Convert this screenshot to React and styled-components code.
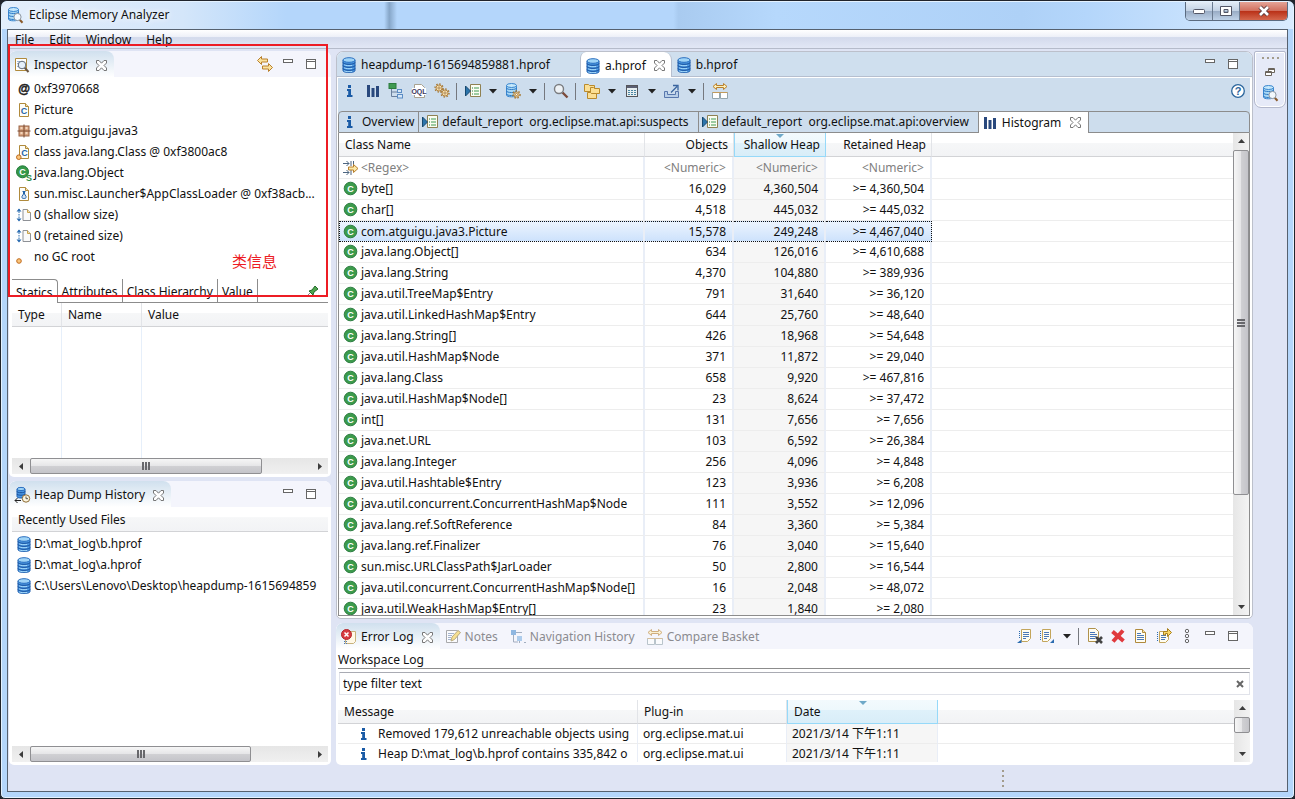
import React from "react";
import styled, { createGlobalStyle, css } from "styled-components";

const ui = {
  font: '"Noto Sans", "Noto Sans CJK SC", sans-serif',
  shell: "#dfe4f4",
  blue: "#cddded",
  line: "#8c8c8c",
  grid: "#ededed",
};

const GlobalStyle = createGlobalStyle`
  * { box-sizing: border-box; }
  body {
    margin: 0;
    background: #20242c;
    color: #111;
    font: 12px/16px ${ui.font};
  }
  button, input {
    font: inherit;
    color: inherit;
    margin: 0;
    padding: 0;
    border: 0;
    background: none;
  }
`;

/* ---------- icons ---------- */

const Svg = styled.svg`
  display: block;
  flex: none;
  overflow: visible;
`;

const Database = () => (
  <g>
    <path d="M2 3v10.5c0 1.4 2.6 2 6 2s6-.6 6-2V3z" fill="#4a97e2" stroke="#1f5fae" />
    <path d="M2 5.5c0 2.4 12 2.4 12 0M2 8.5c0 2.4 12 2.4 12 0M2 11.5c0 2.4 12 2.4 12 0" fill="none" stroke="#174f9c" />
    <path d="M3.2 7.8c1.6 1 5.400 1.100 8 .6M3.2 10.8c1.6 1 5.400 1.100 8 .6M3.2 13.8c1.6 1 5.400 1.100 8 .6" fill="none" stroke="#a5d9fa" />
    <ellipse cx="8" cy="3" rx="6" ry="2.3" fill="#9fd4f7" stroke="#2a6fc0" />
  </g>
);

const PaleDatabase = () => (
  <g>
    <path d="M1.5 2.5v9.500c0 1.200 2 1.800 5 1.800s5-.6 5-1.800V2.500z" fill="#a9d8f5" stroke="#3a86cf" />
    <path d="M1.5 5c0 2 10 2 10 0M1.5 8c0 2 10 2 10 0M1.5 11c0 2 10 2 10 0" fill="none" stroke="#2f7ac6" />
    <ellipse cx="6.5" cy="2.5" rx="5" ry="2" fill="#c6e8fb" stroke="#3a86cf" />
  </g>
);

const Lens = () => (
  <g>
    <path d="M12.5 12.5l3 3.2" stroke="#8a5a2b" strokeWidth="2" />
    <circle cx="10.500" cy="10" r="3.6" fill="#f2f8fd" stroke="#8d97a3" />
  </g>
);

const Cog = ({ x, y, r = 3 }) => (
  <g>
    <circle cx={x} cy={y} r={r + 1} fill="none" stroke="#a5752f" strokeWidth="1.4" strokeDasharray="1.5 1.6" />
    <circle cx={x} cy={y} r={r} fill="#f8e2b4" stroke="#b07f38" strokeWidth="0.9" />
    <circle cx={x} cy={y} r="1.1" fill="#fff" stroke="#9a6a24" strokeWidth="0.8" />
  </g>
);

const Sheet = ({ fill = "#fdfdf8", stroke = "#b08a3c" }) => (
  <g>
    <path d="M3.5 1.5h6l3 3v10h-9z" fill={fill} stroke={stroke} />
    <path d="M9.5 1.5v3h3" fill="#f4e2ad" stroke={stroke} />
  </g>
);

const Letter = ({ x, y, size = 9, fill, children }) => (
  <text x={x} y={y} fontSize={size} fontWeight="700" textAnchor="middle" fill={fill} fontFamily='"Liberation Sans", sans-serif'>
    {children}
  </text>
);

const shapes = {
  database: <Database />,
  app: <g><PaleDatabase /><Lens /></g>,
  inspector: (
    <g>
      <path d="M1.5 1.5h11v12h-11z" fill="#fff" stroke="#b08a3c" />
      <path d="M3 4.5h3M3 6.5h2M3 9.5h2" stroke="#9ab3d4" />
      <path d="M10.5 10.5l4 4.5" stroke="#6a5540" strokeWidth="2" />
      <circle cx="8" cy="8" r="3.8" fill="#e5eff9" stroke="#5f6a78" />
    </g>
  ),
  at: (
    <g stroke="#222" strokeWidth="0.5">
      <Letter x={8} y={11.5} size={12} fill="#222">@</Letter>
    </g>
  ),
  classFile: <g><Sheet /><Letter x={8} y={12} size={9} fill="#2464a8">C</Letter></g>,
  classObject: (
    <g>
      <Sheet />
      <Letter x={8.5} y={12} size={9} fill="#2464a8">C</Letter>
      <circle cx="2.8" cy="13.2" r="2.3" fill="#fac57c" stroke="#c06a1c" />
    </g>
  ),
  packageBox: (
    <g>
      <rect x="3" y="3" width="10" height="10" fill="#d9a582" stroke="#9a6446" />
      <path d="M4.500 5h2M9.500 5h2M4.500 10h2M9.500 10h2" stroke="#f3d6bd" strokeWidth="2" />
      <path d="M8 1.500v13M1.500 8h13" stroke="#7a4a30" />
    </g>
  ),
  classSuper: (
    <g>
      <circle cx="6.5" cy="6.8" r="6" fill="#36994a" stroke="#1f7a38" />
      <Letter x={6.5} y={10} size={9} fill="#fff">C</Letter>
      <Letter x={13} y={15.5} size={9} fill="#2b8a3e">S</Letter>
    </g>
  ),
  loader: (
    <g>
      <Sheet />
      <path d="M6.5 5.500h3M7.5 6v2L6 10.400c-.5 1 .2 2 1.2 2h1.600c1 0 1.700-1 1.200-2L8.500 8V6" fill="#d6e6f7" stroke="#2464a8" />
    </g>
  ),
  size: (
    <g>
      <path d="M3 2v12" stroke="#2b6cb0" strokeDasharray="1.5 1" />
      <path d="M.5 4.5L3 1.5l2.5 3zM.5 11.5L3 14.5l2.5-3z" fill="#2b6cb0" />
      <path d="M7 2.5h4.500l3 3v8H7z" fill="#fafafa" stroke="#8e9196" />
      <path d="M11.5 2.5v3h3" fill="#f4e2ad" stroke="#c9a24b" />
    </g>
  ),
  root: <circle cx="3" cy="12" r="2.3" fill="#fac57c" stroke="#c06a1c" />,
  classIcon: (
    <g>
      <circle cx="7.5" cy="7.5" r="6.3" fill="#3c9b4b" stroke="#2c7d42" />
      <Letter x={7.5} y={10.800} size={9} fill="#fff">C</Letter>
    </g>
  ),
  pin: (
    <g>
      <path d="M2 14l4-4" stroke="#888" />
      <path d="M5 8l3-1 3-4 3 3-4 3-1 3z" fill="#4fa64f" stroke="#246b2c" />
    </g>
  ),
  history: (
    <g>
      <path d="M3 2v7.500c0 1 1.500 1.500 4 1.500s4-.5 4-1.500V2z" fill="#4a97e2" stroke="#1f5fae" />
      <path d="M3 4.500c0 1.600 8 1.600 8 0M3 7c0 1.600 8 1.600 8 0" fill="none" stroke="#174f9c" />
      <ellipse cx="7" cy="2" rx="4" ry="1.600" fill="#9fd4f7" stroke="#2a6fc0" />
      <path d="M7 13.5H1M3.5 11L1 13.5 3.5 16" fill="none" stroke="#222" />
      <circle cx="12" cy="11.5" r="3.7" fill="#fdf6e0" stroke="#8d6b33" />
      <path d="M12 9.5v2.200h2" fill="none" stroke="#555" />
    </g>
  ),
  info: (
    <g fill="#1a5ba6">
      <rect x="6" y="2" width="3" height="3" />
      <path d="M5 6h4v6h1.500v2H5v-2h1.200V8H5z" />
    </g>
  ),
  bars: <path d="M2 2h3v12H2zM6.5 5h3v9h-3zM11 3h3v11h-3z" fill="#29487d" />,
  tree: (
    <g>
      <path d="M3.5 6v7.5H9M3.5 9H9" fill="none" stroke="#6a7f9c" />
      <rect x="1" y="0.5" width="7" height="5" fill="#3f9a52" stroke="#2c7c3f" />
      <rect x="9.5" y="6.5" width="4" height="3" fill="#d5e6f7" stroke="#5b8cc4" />
      <rect x="9.5" y="11.5" width="5" height="3.5" fill="#d5e6f7" stroke="#5b8cc4" />
    </g>
  ),
  oql: (
    <g>
      <path d="M3.5 1.500h7l3 3v10h-10z" fill="#fff" stroke="#a8a290" />
      <rect x="1" y="5" width="14" height="7" fill="#fff" />
      <Letter x={8} y={11} size={7} fill="#3a3560">OQL</Letter>
    </g>
  ),
  gears: <g><Cog x={5} y={5} r={3} /><Cog x={11} y={10} r={3} /></g>,
  report: (
    <g>
      <path d="M5.500 1.500h10v12h-10z" fill="#fbfdf2" stroke="#8f8152" />
      <path d="M9 5h5M9 8h5M9 11h5" stroke="#3f9a52" />
      <path d="M7 5h1M7 8h1M7 11h1" stroke="#2b7a3e" />
      <path d="M.5 3v10l5-5z" fill="#2b74ab" stroke="#17496f" />
    </g>
  ),
  dbGear: <g><PaleDatabase /><Cog x={11.500} y={11.500} r={2.600} /></g>,
  search: (
    <g>
      <path d="M9.5 9.5l5 5" stroke="#7c4b3a" strokeWidth="2.400" />
      <circle cx="6" cy="6" r="4.5" fill="#eef2f5" stroke="#7b7d80" strokeWidth="1.400" />
    </g>
  ),
  folders: (
    <g fill="#fbdf94" stroke="#b98a2c">
      <path d="M.5 1.500h4l1 1h5v6H.5z" />
      <path d="M6.500 4.500h3l1 1h5v5h-9z" />
      <path d="M3.500 9.500h3l1 1h5v5h-9z" />
    </g>
  ),
  calc: (
    <g>
      <rect x="2.5" y="2.5" width="11" height="11" fill="#e6eef0" stroke="#55555a" />
      <path d="M3 4h10" stroke="#5b5f72" strokeWidth="2" />
      <path d="M4 7.5h8M4 9.5h8M4 11.5h8" stroke="#4b86a3" strokeDasharray="2 1" />
    </g>
  ),
  exportIcon: (
    <g>
      <path d="M.5 8.500h3v3h8v-3h3v6H.5z" fill="#b9cfe8" stroke="#5877ad" />
      <path d="M7 9.5l6-6M9 2.5h5v5" fill="none" stroke="#3a659f" strokeWidth="1.300" />
    </g>
  ),
  compare: (
    <g>
      <path d="M1 3.5L4.5.5v2h7v-2l3.500 3-3.500 3v-2h-7v2z" fill="#fff0b8" stroke="#b9802c" />
      <path d="M.5 9.5h7v6h-7zM8.5 9.5h7v6h-7z" fill="#fff" stroke="#93a5ac" />
      <path d="M.5 9.5h15" stroke="#c29a5a" />
    </g>
  ),
  help: (
    <g>
      <circle cx="8" cy="8" r="6.300" fill="#fff" stroke="#2a659c" strokeWidth="1.300" />
      <Letter x={8} y={12} size={11} fill="#2a659c">?</Letter>
    </g>
  ),
  filter: (
    <g>
      <path d="M0 3.5h6M3.5 1L6 3.500 3.500 6M8 1v5M10.500 1v4" fill="none" stroke="#4c6580" />
      <path d="M0 12.5h6M3.5 10L6 12.500 3.500 15M8 10v5" fill="none" stroke="#4c6580" />
      <path d="M5.500 7h5V4.500L15 8.500l-4.500 4V10h-5z" fill="#fce9a9" stroke="#b9802c" />
    </g>
  ),
  link: (
    <g fill="#fbe3a0" stroke="#b9802c">
      <path d="M.5 4.500l4-4V3h6v3h-6v2.500z" />
      <path d="M15.500 11.500l-4-4V10h-6v3h6v2.500z" />
    </g>
  ),
  minimize: <rect x="3.5" y="3.5" width="9" height="3" fill="#fff" stroke="#666" />,
  maximize: (
    <g fill="#fff" stroke="#666">
      <rect x="3.5" y="3.5" width="9" height="9" />
      <path d="M3.5 5.5h9" />
    </g>
  ),
  restore: (
    <g fill="#fff" stroke="#6b645c">
      <path d="M6.5 4.5h6v4h-6zM6.5 5.5h6" />
      <path d="M3.5 7.5h6v4h-6zM3.5 8.5h6" />
    </g>
  ),
  errorLog: (
    <g>
      <path d="M4.500 2.500h10v10l-2 2h-8z" fill="#fff8e6" stroke="#c8b27c" />
      <path d="M3 12.5h4M3 14.5h4" stroke="#4a78b8" strokeDasharray="1 1" />
      <circle cx="5.5" cy="5.5" r="5" fill="#d73b41" stroke="#b3262c" />
      <path d="M3.5 3.5l4 4M7.5 3.500l-4 4" stroke="#fff" strokeWidth="1.500" />
    </g>
  ),
  notes: (
    <g>
      <path d="M1.500 1.500h11v12h-11z" fill="#fff" stroke="#777" />
      <path d="M3 4.5h6M3 6.5h4M3 8.5h3M3 10.5h3" stroke="#6f87ae" />
      <path d="M6 12l1-4 6-6.500 2.500 2-6 7z" fill="#f7d04a" stroke="#8f7a2d" />
    </g>
  ),
  navigation: (
    <g>
      <path d="M3.5 6v7H8M6 3.5h6M14 13.5h2" fill="none" stroke="#6c7f99" />
      <rect x="1" y="1" width="5" height="5" fill="#4d8fd0" />
      <rect x="7" y="7" width="5" height="5" fill="#7fb2e3" />
      <path d="M9.5 12v2" stroke="#6c7f99" />
    </g>
  ),
  importLog: (
    <g>
      <path d="M5.500 1.500h9v9l-3 3h-6z" fill="#fffdf2" stroke="#c3a55b" />
      <path d="M7 4.5h6M7 6.5h6M7 8.5h6M7 10.5h3" stroke="#4a78b8" />
      <path d="M3.5 3v8" stroke="#2b6cb0" strokeDasharray="1 1" />
      <path d="M1 15l4.500-3.500V15z" fill="#2b6cb0" />
    </g>
  ),
  exportLog: (
    <g>
      <path d="M3.500 1.500h8v9l-3 3h-5z" fill="#fffdf2" stroke="#c3a55b" />
      <path d="M5 4.5h5M5 6.5h5M5 8.5h5M5 10.5h3" stroke="#4a78b8" />
      <path d="M1.5 3v9" stroke="#2b6cb0" strokeDasharray="1 1" />
      <path d="M15 11l-4 4h4z" fill="#2b6cb0" />
    </g>
  ),
  clearLog: (
    <g>
      <path d="M1.500.500h7l3 3v10h-10z" fill="#fffdf2" stroke="#b0924c" />
      <path d="M3 4.5h5M3 6.5h7M3 8.5h6M3 10.5h5" stroke="#4a78b8" />
      <path d="M9 9l6 6M15 9l-6 6" stroke="#444" strokeWidth="2.600" />
    </g>
  ),
  deleteLog: <path d="M2.500 3.500l11 9.500M13 2.500l-10 11" stroke="#e03a3e" strokeWidth="4" />,
  openLog: (
    <g>
      <path d="M2.500 1.500h7l3 3v10h-10z" fill="#fffdf2" stroke="#b08a3c" />
      <path d="M9.500 1.500v3h3" fill="#f4e2ad" stroke="#b08a3c" />
      <path d="M4 5.5h4M4 7.5h7M4 9.5h7M4 11.5h7" stroke="#4a78b8" />
    </g>
  ),
  restoreLog: (
    <g>
      <path d="M3.500 3.500h9v8l-3 3h-6z" fill="#fffdf2" stroke="#c3a55b" />
      <path d="M5 7.5h5M5 9.5h5M5 11.5h4" stroke="#4a78b8" />
      <path d="M1.5 4v10" stroke="#2b6cb0" strokeDasharray="1 1" />
      <path d="M7.500 7V3.500h4v-3l4 4-4 4v-3h-2V7z" fill="#fbd766" stroke="#a8801f" />
    </g>
  ),
  viewMenu: (
    <g fill="none" stroke="#666">
      <circle cx="8" cy="3" r="1.700" />
      <circle cx="8" cy="8" r="1.700" />
      <circle cx="8" cy="13" r="1.700" />
    </g>
  ),
};

const Icon = ({ name }) => (
  <Svg width="16" height="16" viewBox="0 0 16 16" aria-hidden="true">{shapes[name]}</Svg>
);

const CloseGlyph = () => (
  <Svg width="11" height="11" viewBox="0 0 11 11" aria-hidden="true">
    <path
      d="M.5.5H3l2.5 2.700L8 .5h2.500V3L8 5.500 10.500 8v2.500H8L5.500 7.800 3 10.500H.5V8L3 5.500.5 3z"
      fill="#fff"
      stroke="#777"
    />
  </Svg>
);

const CaretGlyph = () => (
  <Svg width="8" height="5" viewBox="0 0 8 5" aria-hidden="true"><path d="M0 0h8L4 4.500z" fill="#222" /></Svg>
);

const arrows = { left: "M5 0v7L1 3.500z", right: "M2 0v7l4-3.500z", up: "M0 5h7L3.500 1z", down: "M0 2h7L3.500 6z" };

const Arrow = ({ to }) => (
  <Svg width="7" height="7" viewBox="0 0 7 7" aria-hidden="true"><path d={arrows[to]} fill="#3c3c3c" /></Svg>
);

/* ---------- window frame ---------- */

const Frame = styled.div`
  display: flex;
  flex-direction: column;
  height: 100vh;
  min-height: 480px;
  padding: 0 6px 6px;
  border: 1px solid #20242c;
  border-radius: 7px 7px 5px 5px;
  background: #b4d6fb;
  box-shadow: inset 0 0 0 1px #e4f2ff;
`;

const TitleBar = styled.header`
  display: flex;
  align-items: flex-start;
  height: 28px;
  flex: none;
  margin: 0 -5px;
  padding-left: 5px;
  border-radius: 6px 6px 0 0;
  background: linear-gradient(90deg, #e3eefb 0, #d4e6fa 14%, #b4d6fb 22%, #b4d6fb 29.6%, #86a6c8 30%, #b4d6fb 30.6%, #b4d6fb 52%, #a9cbf0 52.4%, #b6d8fc 60%, #aed1f7 79%, #b4d6fb 84%, #d9ebfe 100%);
  border-top: 1px solid #e4f2ff;
`;

const AppTitle = styled.h1`
  display: flex;
  align-items: center;
  gap: 6px;
  flex: 1;
  height: 26px;
  margin: 0;
  font-size: 12px;
  font-weight: 400;
  text-shadow: 0 0 6px #fff, 0 0 8px #fff;
`;

const WindowButtons = styled.div`
  display: flex;
  margin-right: 5px;
  border: 1px solid #5b6b80;
  border-top: 0;
  border-radius: 0 0 5px 5px;
  overflow: hidden;
`;

const WindowButton = styled.button`
  display: grid;
  place-items: center;
  width: ${p => (p.$close ? 47 : 27)}px;
  height: 18px;
  border-right: ${p => (p.$close ? 0 : "1px solid #6b7b90")};
  background: ${p =>
    p.$close
      ? "linear-gradient(#e5a497 0, #d1705f 48%, #b92f16 50%, #d4674d 100%)"
      : "linear-gradient(#e3ecf6 0, #c3d2e4 48%, #98abc4 50%, #bfd2e8 100%)"};
`;

const Client = styled.div`
  display: flex;
  flex-direction: column;
  flex: 1;
  min-height: 0;
  border: 1px solid #56616f;
  background: ${ui.shell};
`;

const MenuBar = styled.nav`
  display: flex;
  align-items: center;
  gap: 15px;
  height: 19px;
  flex: none;
  padding: 2px 0 0 7px;
  border-bottom: 1px solid #b5bbca;
  background: linear-gradient(#fff 0, #edf0f8 38%, #d3daec 42%, #e2e7f5 100%);
`;

const MenuItem = styled.button`
  line-height: 18px;
`;

const Workbench = styled.main`
  display: flex;
  flex: 1;
  min-height: 0;
  padding: 2px 1px 0;
`;

const Column = styled.div`
  position: relative;
  display: flex;
  flex-direction: column;
  gap: 4px;
  flex: ${p => p.$grow} 1 0;
  min-width: 0;
  min-height: 0;
  margin-right: ${p => p.$gap}px;
`;

const TrimBar = styled.aside`
  width: 32px;
  flex: none;
`;

const TrimStack = styled.div`
  display: flex;
  flex-direction: column;
  align-items: center;
  gap: 5px;
  height: 57px;
  padding-top: 5px;
  border: 1px solid #b3b8cc;
  border-radius: 2px 2px 7px 7px;
  background: #e6eaf8;
  box-shadow: inset 0 0 0 1px #fff;
`;

const Handle = styled.div`
  width: ${p => (p.$vertical ? 2 : 17)}px;
  height: ${p => (p.$vertical ? 17 : 2)}px;
  background: repeating-linear-gradient(${p => (p.$vertical ? "180deg" : "90deg")}, #a39c8c 0 2px, transparent 2px 5px);
`;

const StatusBar = styled.footer`
  display: flex;
  align-items: center;
  justify-content: flex-end;
  height: 26px;
  flex: none;
  padding-right: 283px;
`;

/* ---------- views ---------- */

const View = styled.section`
  display: flex;
  flex-direction: column;
  flex: ${p => p.$grow} 1 0;
  min-height: 0;
  border-radius: 7px 7px 5px 5px;
  background: #fff;
  overflow: hidden;
`;

const ViewBody = styled.div`
  display: flex;
  flex-direction: column;
  flex: 1;
  min-height: 0;
  padding: 0 3px 3px ${p => p.$left || 3}px;
`;

const ViewHeader = styled.div`
  display: flex;
  align-items: stretch;
  height: 26px;
  flex: none;
  padding-right: 9px;
  background: #f4f5fc;
`;

const ViewTab = styled.button`
  display: flex;
  align-items: center;
  gap: 4px;
  padding: 2px 7px 0 5px;
  border-radius: 6px 8px 0 0;
  white-space: nowrap;
  svg:last-child { margin-left: 4px; }
  ${p =>
    p.$active
      ? css`
          background: linear-gradient(#d0e0ee, #fff);
        `
      : css`
          color: #8b8b90;
          svg { opacity: 0.6; }
        `}
`;

const Tools = styled.div`
  display: flex;
  align-items: center;
  margin-left: auto;
`;

const ToolButton = styled.button`
  display: grid;
  place-items: center;
  width: ${p => (p.$caret ? 17 : 23)}px;
  height: 23px;
`;

const Separator = styled.span`
  width: 1px;
  height: 17px;
  margin: 0 4px 0 3px;
  background: #75787e;
`;

const Tool = ({ icon, label }) => (
  <ToolButton aria-label={label}><Icon name={icon} /></ToolButton>
);

const CaretTool = ({ label }) => (
  <ToolButton $caret aria-label={label}><CaretGlyph /></ToolButton>
);

const SizeTools = () => (
  <>
    <Tool icon="minimize" label="Minimize" />
    <Tool icon="maximize" label="Maximize" />
  </>
);

/* ---------- scroll bars ---------- */

const Track = styled.div`
  display: flex;
  flex: none;
  flex-direction: ${p => (p.$vertical ? "column" : "row")};
  ${p => (p.$vertical ? "width: 16px;" : "height: 16px;")}
  background: ${p =>
    p.$vertical ? "linear-gradient(90deg, #e6e6e6, #f3f3f3)" : "linear-gradient(#e6e6e6, #f0f0f0)"};
`;

const ArrowButton = styled.button`
  display: grid;
  place-items: center;
  flex: none;
  width: ${p => (p.$vertical ? 16 : 18)}px;
  height: ${p => (p.$vertical ? 17 : 16)}px;
`;

const Run = styled.div`
  flex: 1;
  min-width: 0;
  min-height: 0;
`;

const Thumb = styled.div`
  display: grid;
  place-items: center;
  border: 1px solid #8f8f92;
  border-radius: 2px;
  background: linear-gradient(${p => (p.$vertical ? "90deg" : "180deg")}, #f6f6f6 0, #e6e6e8 48%, #d0d0d3 52%, #c4c4c9 100%);
  ${p => (p.$vertical ? "width: 16px;" : "height: 16px;")}
`;

const Grip = styled.div`
  width: 8px;
  height: 8px;
  background: repeating-linear-gradient(${p => (p.$vertical ? "180deg" : "90deg")}, #68686c 0 2px, transparent 2px 3px);
`;

const ScrollBar = ({ vertical, size, grip = true }) => (
  <Track $vertical={vertical}>
    <ArrowButton $vertical={vertical} aria-label="Scroll back"><Arrow to={vertical ? "up" : "left"} /></ArrowButton>
    <Run>
      <Thumb $vertical={vertical} style={vertical ? { height: size } : { width: size }}>
        {grip && <Grip $vertical={vertical} />}
      </Thumb>
    </Run>
    <ArrowButton $vertical={vertical} aria-label="Scroll forward"><Arrow to={vertical ? "down" : "right"} /></ArrowButton>
  </Track>
);

/* ---------- tables ---------- */

const Table = styled.table`
  width: 100%;
  table-layout: fixed;
  border-spacing: 0;
  white-space: nowrap;
`;

const Th = styled.th`
  position: relative;
  height: 24px;
  padding: 0 5px 0 6px;
  font-weight: 400;
  text-align: ${p => (p.$num ? "right" : "left")};
  border-right: 1px solid #e2e4e8;
  border-bottom: 1px solid #d2d3d6;
  background: linear-gradient(#fff 0, #fff 42%, #f6f7f8 44%, #f2f3f5 100%);
  overflow: hidden;
  &:last-child { border-right: 0; }
  ${p =>
    p.$sorted &&
    css`
      border-left: 1px solid #96d9f9;
      border-right-color: #96d9f9;
      border-bottom-color: #96d9f9;
      background: linear-gradient(#f3fafd 0, #eef8fc 42%, #dff1fa 44%, #d8edf8 100%);
    `}
`;

const SortMark = styled.svg`
  position: absolute;
  top: 1px;
  left: 50%;
  margin-left: -4px;
`;

const Td = styled.td`
  height: 21px;
  padding: 0 6px 0 4px;
  text-align: ${p => (p.$num ? "right" : "left")};
  color: ${p => (p.$muted ? "#808080" : "inherit")};
  border-right: 2px solid #e9eef7;
  border-bottom: 1px solid ${ui.grid};
  background: ${p => (p.$sorted ? "#f6f6f6" : "#fff")};
  overflow: hidden;
  &:last-child { border-right: 0; }
`;

const Cell = styled.div`
  display: flex;
  align-items: center;
  gap: ${p => p.$gap || 2}px;
  padding-left: ${p => p.$indent || 0}px;
`;

const Tr = styled.tr`
  ${Td} { height: ${p => (p.$filter ? 22 : 21)}px; }
  ${p =>
    p.$selected &&
    css`
      line-height: 15px;
      ${Td}:not(:last-child) {
        border-top: 1px dotted #111;
        border-bottom: 1px dotted #111;
        background: linear-gradient(#ecf4fe, #cde2fc);
      }
      ${Td}:first-child { border-left: 1px dotted #111; padding-left: 3px; }
      ${Td}:nth-child(4) { border-right: 1px dotted #111; padding-right: 7px; }
    `}
`;

const LogTd = styled(Td)`
  height: 20px;
  padding: 0 0 0 5px;
  border-right-width: 1px;
`;

const SortHeader = ({ children, num }) => (
  <Th $sorted $num={num} aria-sort="descending">
    <SortMark width="8" height="4" viewBox="0 0 8 4" aria-hidden="true"><path d="M0 0h8L4 4z" fill="#6fa9c8" /></SortMark>
    {children}
  </Th>
);

/* ---------- left column ---------- */

const ItemList = styled.ul`
  margin: 0;
  padding: 1px 0 0;
  list-style: none;
`;

const Item = styled.li`
  display: flex;
  align-items: center;
  gap: 2px;
  height: 21px;
  padding-left: 4px;
  white-space: nowrap;
  overflow: hidden;
`;

const FolderTabs = styled.div`
  display: flex;
  height: 24px;
  flex: none;
  margin-top: 12px;
`;

const FolderTab = styled.button`
  padding: 2px 4px 0;
  white-space: nowrap;
  border-right: 1px solid ${ui.line};
  ${p =>
    p.$active
      ? css`
          border-top: 1px solid ${ui.line};
          border-radius: 0 4px 0 0;
        `
      : css`
          border-bottom: 1px solid ${ui.line};
        `}
`;

const FolderRest = styled.div`
  display: flex;
  align-items: center;
  justify-content: flex-end;
  flex: 1;
  padding-right: 8px;
  border-bottom: 1px solid ${ui.line};
`;

const FieldArea = styled.div`
  display: flex;
  flex: 1;
  min-height: 0;
  overflow: hidden;
  ${Table} { height: 100%; }
  td { padding: 0; border-right: 1px solid #e6effa; }
  td:last-child { border-right: 0; }
`;

const Spacer = styled.div`
  flex: 1;
`;

const ListHeading = styled.h2`
  height: 25px;
  margin: 0;
  padding: 0 6px;
  font-size: 12px;
  font-weight: 400;
  line-height: 26px;
  border-bottom: 1px solid #d2d3d6;
  background: linear-gradient(#fff 0, #fff 42%, #f6f7f8 44%, #f2f3f5 100%);
`;

const Highlight = styled.div`
  position: absolute;
  top: -7px;
  left: -1px;
  width: 320px;
  height: 253px;
  border: 2px solid #ed1c24;
  pointer-events: none;
`;

const HighlightText = styled.span`
  position: absolute;
  right: 49px;
  bottom: 24px;
  color: #ed1c24;
  font-size: 15px;
  line-height: 20px;
`;

/* ---------- editor ---------- */

const Editor = styled.section`
  display: flex;
  flex-direction: column;
  flex: 4 1 0;
  min-height: 0;
  border: 1px solid #bcc0cb;
  border-radius: 7px 7px 5px 5px;
  background: #fff;
  overflow: hidden;
`;

const EditorTabs = styled.div`
  display: flex;
  height: 25px;
  flex: none;
  padding-right: 8px;
  border-bottom: 1px solid #b6bfcf;
  background: #cfdfee;
`;

const EditorTab = styled.button`
  display: flex;
  align-items: center;
  gap: 4px;
  padding: 2px ${p => (p.$wide ? 30 : 6)}px 0 4px;
  white-space: nowrap;
  ${p =>
    p.$active &&
    css`
      margin-bottom: -1px;
      border: 1px solid #b6bfcf;
      border-width: 0 1px;
      border-radius: 6px 8px 0 0;
      background: #fff;
      svg:last-child { margin-left: 4px; }
    `}
`;

const EditorBody = styled.div`
  display: flex;
  flex-direction: column;
  flex: 1;
  min-height: 0;
  margin: 1px 2px 2px 1px;
  background: ${ui.blue};
`;

const EditorTools = styled.div`
  display: flex;
  align-items: center;
  height: 33px;
  flex: none;
  padding: 0 1px 7px 0;
`;

const PageTabs = styled.div`
  display: flex;
  height: 22px;
  flex: none;
  border: 1px solid ${ui.line};
  border-radius: 4px 4px 0 0;
`;

const PageTab = styled.button`
  display: flex;
  align-items: center;
  gap: 4px;
  padding: 0 ${p => (p.$report ? 9 : 4)}px 0 3px;
  border-right: 1px solid ${ui.line};
  white-space: pre;
  ${p =>
    p.$active &&
    css`
      margin-bottom: -1px;
      padding-right: 7px;
      background: #fff;
      svg:last-child { margin-left: 5px; }
    `}
`;

const PageArea = styled.div`
  display: flex;
  flex: 1;
  min-height: 0;
  border: 1px solid ${ui.line};
  border-top: 0;
  background: #fff;
  overflow: hidden;
`;

const Scroller = styled.div`
  flex: 1;
  min-width: 0;
  overflow: hidden;
`;

/* ---------- log ---------- */

const LogTitle = styled.h2`
  height: 20px;
  flex: none;
  margin: 0 0 3px;
  font-size: 12px;
  font-weight: 400;
  line-height: 21px;
  border-bottom: 1px solid ${ui.line};
`;

const FilterBox = styled.div`
  display: flex;
  align-items: center;
  height: 23px;
  flex: none;
  margin: 0 0 5px 1px;
  border: 1px solid #e1e3ea;
  border-top-color: #a9abb3;
  input {
    flex: 1;
    min-width: 0;
    padding-left: 3px;
    outline: 0;
  }
`;

const ClearButton = styled.button`
  display: grid;
  place-items: center;
  width: 18px;
  height: 20px;
`;

const LogArea = styled.div`
  display: flex;
  flex: 1;
  min-height: 0;
  overflow: hidden;
`;

/* ---------- data ---------- */

const inspectorItems = [
  ["at", "0xf3970668"],
  ["classFile", "Picture"],
  ["packageBox", "com.atguigu.java3"],
  ["classObject", "class java.lang.Class @ 0xf3800ac8"],
  ["classSuper", "java.lang.Object"],
  ["loader", "sun.misc.Launcher$AppClassLoader @ 0xf38acb..."],
  ["size", "0 (shallow size)"],
  ["size", "0 (retained size)"],
  ["root", "no GC root"],
];

const recentFiles = [
  "D:\\mat_log\\b.hprof",
  "D:\\mat_log\\a.hprof",
  "C:\\Users\\Lenovo\\Desktop\\heapdump-1615694859",
];

const classes = [
  ["byte[]", "16,029", "4,360,504", "4,360,504"],
  ["char[]", "4,518", "445,032", "445,032"],
  ["com.atguigu.java3.Picture", "15,578", "249,248", "4,467,040"],
  ["java.lang.Object[]", "634", "126,016", "4,610,688"],
  ["java.lang.String", "4,370", "104,880", "389,936"],
  ["java.util.TreeMap$Entry", "791", "31,640", "36,120"],
  ["java.util.LinkedHashMap$Entry", "644", "25,760", "48,640"],
  ["java.lang.String[]", "426", "18,968", "54,648"],
  ["java.util.HashMap$Node", "371", "11,872", "29,040"],
  ["java.lang.Class", "658", "9,920", "467,816"],
  ["java.util.HashMap$Node[]", "23", "8,624", "37,472"],
  ["int[]", "131", "7,656", "7,656"],
  ["java.net.URL", "103", "6,592", "26,384"],
  ["java.lang.Integer", "256", "4,096", "4,848"],
  ["java.util.Hashtable$Entry", "123", "3,936", "6,208"],
  ["java.util.concurrent.ConcurrentHashMap$Node", "111", "3,552", "12,096"],
  ["java.lang.ref.SoftReference", "84", "3,360", "5,384"],
  ["java.lang.ref.Finalizer", "76", "3,040", "15,640"],
  ["sun.misc.URLClassPath$JarLoader", "50", "2,800", "16,544"],
  ["java.util.concurrent.ConcurrentHashMap$Node[]", "16", "2,048", "48,072"],
  ["java.util.WeakHashMap$Entry[]", "23", "1,840", "2,080"],
];

const logEntries = [
  "Removed 179,612 unreachable objects using",
  "Heap D:\\mat_log\\b.hprof contains 335,842 o",
];

const InspectorView = () => (
  <View $grow={3}>
    <ViewHeader>
      <ViewTab $active><Icon name="inspector" />Inspector<CloseGlyph /></ViewTab>
      <Tools>
        <Tool icon="link" label="Link with Snapshot" />
        <SizeTools />
      </Tools>
    </ViewHeader>
    <ViewBody>
      <ItemList>
        {inspectorItems.map(([icon, text]) => (
          <Item key={text}><Icon name={icon} />{text}</Item>
        ))}
      </ItemList>
      <FolderTabs>
        <FolderTab $active>Statics</FolderTab>
        <FolderTab>Attributes</FolderTab>
        <FolderTab>Class Hierarchy</FolderTab>
        <FolderTab>Value</FolderTab>
        <FolderRest><Icon name="pin" /></FolderRest>
      </FolderTabs>
      <FieldArea>
        <Table>
          <colgroup><col width="50" /><col width="80" /><col /></colgroup>
          <thead><tr><Th>Type</Th><Th>Name</Th><Th>Value</Th></tr></thead>
          <tbody><tr><td /><td /><td /></tr></tbody>
        </Table>
      </FieldArea>
      <ScrollBar size="83%" />
    </ViewBody>
  </View>
);

const HistoryView = () => (
  <View $grow={2}>
    <ViewHeader>
      <ViewTab $active><Icon name="history" />Heap Dump History<CloseGlyph /></ViewTab>
      <Tools><SizeTools /></Tools>
    </ViewHeader>
    <ViewBody>
      <ListHeading>Recently Used Files</ListHeading>
      <ItemList>
        {recentFiles.map(file => (
          <Item key={file}><Icon name="database" />{file}</Item>
        ))}
      </ItemList>
      <Spacer />
      <ScrollBar size="79%" />
    </ViewBody>
  </View>
);

const HistogramTable = () => (
  <Table>
    <colgroup><col width="306" /><col width="89" /><col width="92" /><col width="106" /><col /></colgroup>
    <thead>
      <tr>
        <Th>Class Name</Th>
        <Th $num>Objects</Th>
        <SortHeader num>Shallow Heap</SortHeader>
        <Th $num>Retained Heap</Th>
        <Th />
      </tr>
    </thead>
    <tbody>
      <Tr $filter>
        <Td $muted><Cell><Icon name="filter" />&lt;Regex&gt;</Cell></Td>
        <Td $num $muted>&lt;Numeric&gt;</Td>
        <Td $num $muted $sorted>&lt;Numeric&gt;</Td>
        <Td $num $muted>&lt;Numeric&gt;</Td>
        <Td />
      </Tr>
      {classes.map(([name, objects, shallow, retained]) => (
        <Tr key={name} $selected={name === "com.atguigu.java3.Picture"}>
          <Td><Cell><Icon name="classIcon" />{name}</Cell></Td>
          <Td $num>{objects}</Td>
          <Td $num $sorted>{shallow}</Td>
          <Td $num>&gt;= {retained}</Td>
          <Td />
        </Tr>
      ))}
    </tbody>
  </Table>
);

const EditorPane = () => (
  <Editor>
    <EditorTabs>
      <EditorTab $wide><Icon name="database" />heapdump-1615694859881.hprof</EditorTab>
      <EditorTab $active><Icon name="database" />a.hprof<CloseGlyph /></EditorTab>
      <EditorTab><Icon name="database" />b.hprof</EditorTab>
      <Tools><SizeTools /></Tools>
    </EditorTabs>
    <EditorBody>
      <EditorTools>
        <Tool icon="info" label="Overview" />
        <Tool icon="bars" label="Histogram" />
        <Tool icon="tree" label="Dominator tree" />
        <Tool icon="oql" label="OQL" />
        <Tool icon="gears" label="Thread overview" />
        <Separator />
        <Tool icon="report" label="Run report" />
        <CaretTool label="Reports" />
        <Tool icon="dbGear" label="Query browser" />
        <CaretTool label="Queries" />
        <Separator />
        <Tool icon="search" label="Find object" />
        <Separator />
        <Tool icon="folders" label="Group result" />
        <CaretTool label="Grouping" />
        <Tool icon="calc" label="Calculate retained size" />
        <CaretTool label="Calculations" />
        <Tool icon="exportIcon" label="Export" />
        <CaretTool label="Export formats" />
        <Separator />
        <Tool icon="compare" label="Compare" />
        <Tools><Tool icon="help" label="Help" /></Tools>
      </EditorTools>
      <PageTabs>
        <PageTab><Icon name="info" />Overview</PageTab>
        <PageTab $report><Icon name="report" />{"default_report  org.eclipse.mat.api:suspects"}</PageTab>
        <PageTab $report><Icon name="report" />{"default_report  org.eclipse.mat.api:overview"}</PageTab>
        <PageTab $active><Icon name="bars" />Histogram<CloseGlyph /></PageTab>
      </PageTabs>
      <PageArea>
        <Scroller><HistogramTable /></Scroller>
        <ScrollBar vertical size="77%" />
      </PageArea>
    </EditorBody>
  </Editor>
);

const ErrorLogView = () => (
  <View $grow={1}>
    <ViewHeader>
      <ViewTab $active><Icon name="errorLog" />Error Log<CloseGlyph /></ViewTab>
      <ViewTab><Icon name="notes" /><span>Notes</span></ViewTab>
      <ViewTab><Icon name="navigation" /><span>Navigation History</span></ViewTab>
      <ViewTab><Icon name="compare" /><span>Compare Basket</span></ViewTab>
      <Tools>
        <Tool icon="importLog" label="Export Log" />
        <Tool icon="exportLog" label="Import Log" />
        <CaretTool label="Import options" />
        <Separator />
        <Tool icon="clearLog" label="Clear Log Viewer" />
        <Tool icon="deleteLog" label="Delete Log" />
        <Tool icon="openLog" label="Open Log" />
        <Tool icon="restoreLog" label="Restore Log" />
        <Tool icon="viewMenu" label="View Menu" />
        <SizeTools />
      </Tools>
    </ViewHeader>
    <ViewBody $left={2}>
      <LogTitle>Workspace Log</LogTitle>
      <FilterBox>
        <input type="text" aria-label="Filter" defaultValue="type filter text" />
        <ClearButton aria-label="Clear filter">
          <Svg width="8" height="8" viewBox="0 0 8 8" aria-hidden="true">
            <path d="M1 1l6 6M7 1L1 7" stroke="#666" strokeWidth="2" />
          </Svg>
        </ClearButton>
      </FilterBox>
      <LogArea>
        <Scroller>
          <Table>
            <colgroup><col width="300" /><col width="149" /><col width="151" /><col /></colgroup>
            <thead>
              <tr><Th>Message</Th><Th>Plug-in</Th><SortHeader>Date</SortHeader><Th /></tr>
            </thead>
            <tbody>
              {logEntries.map(text => (
                <tr key={text}>
                  <LogTd><Cell $indent={13} $gap={6}><Icon name="info" />{text}</Cell></LogTd>
                  <LogTd>org.eclipse.mat.ui</LogTd>
                  <LogTd $sorted>2021/3/14 下午1:11</LogTd>
                  <LogTd />
                </tr>
              ))}
            </tbody>
          </Table>
        </Scroller>
        <ScrollBar vertical size="55%" grip={false} />
      </LogArea>
    </ViewBody>
  </View>
);

export default function App() {
  return (
    <>
      <GlobalStyle />
      <Frame>
        <TitleBar>
          <AppTitle><Icon name="app" />Eclipse Memory Analyzer</AppTitle>
          <WindowButtons>
            <WindowButton aria-label="Minimize window">
              <Svg width="12" height="6" viewBox="0 0 12 6"><rect x=".5" y="1.5" width="11" height="4" rx="1" fill="#fff" stroke="#535666" /></Svg>
            </WindowButton>
            <WindowButton aria-label="Maximize window">
              <Svg width="12" height="10" viewBox="0 0 12 10">
                <path d="M.5.5h11v9H.5zM4 3.5v3h4v-3z" fill="#fff" fillRule="evenodd" stroke="#535666" />
              </Svg>
            </WindowButton>
            <WindowButton $close aria-label="Close window">
              <Svg width="12" height="10" viewBox="0 0 12 10">
                <path d="M2 1l8 8M10 1L2 9" stroke="#5a3a3c" strokeWidth="4.5" />
                <path d="M2 1l8 8M10 1L2 9" stroke="#fff" strokeWidth="2.6" />
              </Svg>
            </WindowButton>
          </WindowButtons>
        </TitleBar>
        <Client>
          <MenuBar>
            {["File", "Edit", "Window", "Help"].map(name => <MenuItem key={name}>{name}</MenuItem>)}
          </MenuBar>
          <Workbench>
            <Column $grow={322} $gap={5}>
              <InspectorView />
              <HistoryView />
              <Highlight><HighlightText>类信息</HighlightText></Highlight>
            </Column>
            <Column $grow={917} $gap={1}>
              <EditorPane />
              <ErrorLogView />
            </Column>
            <TrimBar>
              <TrimStack>
                <Handle />
                <Icon name="restore" />
                <Icon name="app" />
              </TrimStack>
            </TrimBar>
          </Workbench>
          <StatusBar><Handle $vertical /></StatusBar>
        </Client>
      </Frame>
    </>
  );
}
